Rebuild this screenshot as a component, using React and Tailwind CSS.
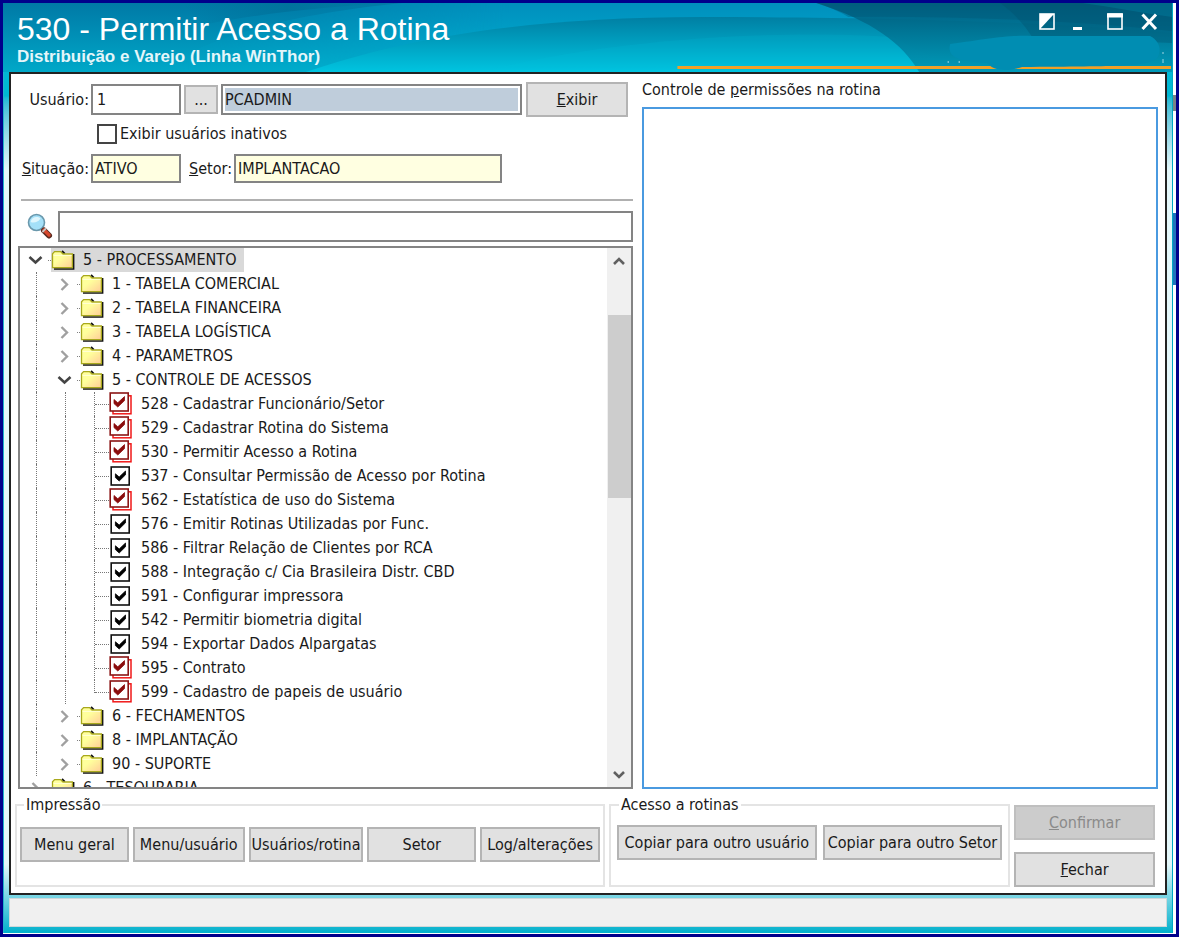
import { useState } from "react";

const treeItems = [
  { level: 0, label: "5 - PROCESSAMENTO", open: true },
  { level: 1, label: "1 - TABELA COMERCIAL" },
  { level: 1, label: "2 - TABELA FINANCEIRA" },
  { level: 1, label: "3 - TABELA LOGÍSTICA" },
  { level: 1, label: "4 - PARAMETROS" },
  { level: 1, label: "5 - CONTROLE DE ACESSOS", open: true },
  { level: 2, label: "528 - Cadastrar Funcionário/Setor", red: true },
  { level: 2, label: "529 - Cadastrar Rotina do Sistema", red: true },
  { level: 2, label: "530 - Permitir Acesso a Rotina", red: true },
  { level: 2, label: "537 - Consultar Permissão de Acesso por Rotina" },
  { level: 2, label: "562 - Estatística de uso do Sistema", red: true },
  { level: 2, label: "576 - Emitir Rotinas Utilizadas por Func." },
  { level: 2, label: "586 - Filtrar Relação de Clientes por RCA" },
  { level: 2, label: "588 - Integração c/ Cia Brasileira Distr. CBD" },
  { level: 2, label: "591 - Configurar impressora" },
  { level: 2, label: "542 - Permitir biometria digital" },
  { level: 2, label: "594 - Exportar Dados Alpargatas" },
  { level: 2, label: "595 - Contrato", red: true },
  { level: 2, label: "599 - Cadastro de papeis de usuário", red: true, last: true },
  { level: 1, label: "6 - FECHAMENTOS" },
  { level: 1, label: "8 - IMPLANTAÇÃO" },
  { level: 1, label: "90 - SUPORTE" },
  { level: 0, label: "6 - TESOURARIA" },
];

const FolderIcon = () => (
  <svg className="w-6 h-6 shrink-0" viewBox="0 0 24 24">
    <defs>
      <linearGradient id="folder" x1="0" y1="0" x2="1" y2="1">
        <stop offset="0.4" stopColor="#ffff9c" />
        <stop offset="1" stopColor="#ffcc98" />
      </linearGradient>
    </defs>
    <path d="M3 21H22.6V6" fill="none" stroke="#111" strokeWidth="1.6" />
    <path d="M11 3L13.8 5.6" fill="none" stroke="#111" strokeWidth="1.8" />
    <path d="M1.5 19.6V5.8L3.6 3.6H9.6L12 6H21.4V19.6Z" fill="url(#folder)" stroke="#a8a81c" strokeWidth="1.3" />
    <path d="M2.6 7.4H20.6" stroke="#ffffd8" strokeWidth="1" />
  </svg>
);

const CheckIcon = ({ red }) =>
  red ? (
    <svg className="w-6 h-6 shrink-0" viewBox="0 0 24 24">
      <rect x="4" y="3.8" width="18" height="18" fill="#fff" stroke="#f01818" strokeWidth="1.5" />
      <rect x="1.2" y="1" width="18" height="18" fill="#fff" stroke="#8b1515" strokeWidth="1.6" />
      <path d="M5 7.5L8.8 10.8L15.5 4.6V8.6L8.8 15L5 11.6Z" fill="#8b0d0d" stroke="#8b0d0d" strokeWidth="0.8" />
    </svg>
  ) : (
    <svg className="w-6 h-6 shrink-0" viewBox="0 0 24 24">
      <rect x="2.2" y="3" width="18" height="18" fill="#fff" stroke="#111" strokeWidth="1.6" />
      <path d="M6.4 9.8L10.2 13L16.5 7V10.8L10.2 17L6.4 13.6Z" fill="#000" stroke="#000" strokeWidth="0.8" />
    </svg>
  );

const Chevron = ({ open }) => (
  <svg className="w-[29px] h-6 shrink-0" viewBox="0 0 29 24" fill="none">
    {open ? (
      <path d="M7.5 9L13.5 14.5L19.5 9" stroke="#444" strokeWidth="2.6" />
    ) : (
      <path d="M10.5 7L16 12.5L10.5 18" stroke="#a0a0a0" strokeWidth="2.4" />
    )}
    <path d="M26 12.5H29" stroke="#808080" strokeDasharray="1 1" />
  </svg>
);

const Guide = () => (
  <span className="w-[29px] h-6 shrink-0 flex">
    <span className="w-[15px] border-r border-dotted border-[#777]" />
  </span>
);

const Elbow = ({ last }) => (
  <span className="w-[29px] h-6 shrink-0 flex items-start">
    <span className={`w-[15px] border-r border-dotted border-[#777] ${last ? "h-[13px]" : "h-6"}`} />
    <span className="flex-1 h-[13px] border-b border-dotted border-[#777]" />
  </span>
);

const TreeRow = ({ item, selected, onSelect }) => (
  <li className="flex h-6 shrink-0">
    {item.level > 0 && <Guide />}
    {item.level > 1 && <Guide />}
    {item.level > 1 ? <Elbow last={item.last} /> : <Chevron open={item.open} />}
    <button
      type="button"
      onClick={onSelect}
      className={`flex items-center gap-2 pr-2 whitespace-nowrap ${selected ? "bg-[#d9d9d9]" : ""}`}
    >
      {item.level > 1 ? <CheckIcon red={item.red} /> : <FolderIcon />}
      <span>{item.label}</span>
    </button>
  </li>
);

const Button = ({ children, className = "", disabled }) => (
  <button
    type="button"
    disabled={disabled}
    className={`border-2 whitespace-nowrap flex items-center justify-center ${
      disabled ? "bg-[#cccccc] border-[#bfbfbf] text-[#8a8a8a]" : "bg-[#e1e1e1] border-[#b4b4b4]"
    } ${className}`}
  >
    <span>{children}</span>
  </button>
);

const TitleBar = () => (
  <header className="relative h-[69px] shrink-0 flex justify-between text-white font-['Liberation_Sans',Arial,sans-serif]">
    <svg className="absolute inset-0 w-full h-full" viewBox="0 0 1170 69" preserveAspectRatio="none">
      <defs>
        <linearGradient id="base" x1="0" y1="0" x2="0" y2="1">
          <stop offset="0" stopColor="#0079a6" />
          <stop offset="1" stopColor="#00a8c8" />
        </linearGradient>
        <linearGradient id="band" x1="0" y1="0" x2="0" y2="1">
          <stop offset="0" stopColor="#008fbd" />
          <stop offset="1" stopColor="#00b4d2" />
        </linearGradient>
        <linearGradient id="bandFade" x1="0" y1="0" x2="1" y2="0">
          <stop offset="0" stopColor="#fff" stopOpacity="0" />
          <stop offset="0.35" stopColor="#fff" />
        </linearGradient>
        <mask id="bandMask">
          <rect x="150" width="1020" height="69" fill="url(#bandFade)" />
        </mask>
        <linearGradient id="wave" x1="0" y1="0" x2="0" y2="1">
          <stop offset="0" stopColor="#007fa3" />
          <stop offset="1" stopColor="#00c4e0" />
        </linearGradient>
        <linearGradient id="dark" x1="0" y1="0" x2="0" y2="1">
          <stop offset="0" stopColor="#005878" />
          <stop offset="1" stopColor="#0093b2" />
        </linearGradient>
        <linearGradient id="topGlow" x1="0" y1="0" x2="1" y2="0">
          <stop offset="0" stopColor="#006f98" stopOpacity="0" />
          <stop offset="0.5" stopColor="#006f98" stopOpacity="0.7" />
          <stop offset="1" stopColor="#006f98" stopOpacity="0" />
        </linearGradient>
      </defs>
      <rect width="1170" height="69" fill="url(#base)" />
      <path d="M150 69C200 40 260 14 400 0H1170V69Z" fill="url(#band)" mask="url(#bandMask)" />
      <path d="M200 22C260 10 320 4 390 0H180Z" fill="url(#topGlow)" />
      <path d="M303 69C400 36 520 14 700 14C900 14 1060 20 1170 30V69Z" fill="url(#wave)" />
      <path d="M480 69C600 36 780 26 890 34L960 69Z" fill="#00c0dc" opacity="0.15" />
      <path d="M814 0C870 18 900 40 917 69H1170V0Z" fill="url(#dark)" opacity="0.85" />
      <path d="M814 0C830 5 840 10 846 14C960 13 1080 18 1170 28V0Z" fill="#005575" opacity="0.35" />
      <path d="M998 0C1012 10 1024 24 1030 34L1170 40V0Z" fill="#00506e" opacity="0.35" />
      <path d="M1080 0C1110 4 1140 10 1170 14V0Z" fill="#0086a8" opacity="0.35" />
      <rect x="675" y="63" width="494" height="3" fill="#f0a028" />
      <path d="M948 41C985 36 1000 32 1030 33L1148 33C1158 38 1160 48 1155 55C1145 64 1120 63 1020 64C1000 70 990 66 985 60C960 58 944 56 948 41Z" fill="#008db2" />
      <path d="M946 58V60M957 58V60M1161 49V51M1161 56V60" stroke="#9fd4e2" strokeWidth="1" />
    </svg>
    <div className="relative pl-3.5 pt-2">
      <h1 className="text-[32px] leading-9">530 - Permitir Acesso a Rotina</h1>
      <p className="text-[17px] leading-5 font-bold text-[#e4f6fa]">Distribuição e Varejo (Linha WinThor)</p>
    </div>
    <div className="relative flex items-start gap-[17px] pt-2.5 pr-3.5">
      <button type="button" aria-label="Recolher">
        <svg width="17" height="18" viewBox="0 0 17 18">
          <rect x="1" y="1" width="14" height="15" fill="none" stroke="#fff" strokeWidth="1.6" />
          <path d="M1 1H15L1 16Z" fill="#fff" />
        </svg>
      </button>
      <button type="button" aria-label="Minimizar">
        <svg width="17" height="18" viewBox="0 0 17 18">
          <path d="M0 15.5H9" stroke="#fff" strokeWidth="3" />
        </svg>
      </button>
      <button type="button" aria-label="Maximizar">
        <svg width="17" height="18" viewBox="0 0 17 18">
          <rect x="1" y="1" width="14" height="15" fill="none" stroke="#fff" strokeWidth="1.6" />
          <path d="M0 2.5H16" stroke="#fff" strokeWidth="4" />
        </svg>
      </button>
      <button type="button" aria-label="Fechar janela">
        <svg width="17" height="18" viewBox="0 0 17 18">
          <path d="M1.5 1.5L15 16M15 1.5L1.5 16" stroke="#fff" strokeWidth="3" />
        </svg>
      </button>
    </div>
  </header>
);

const App = () => {
  const [user, setUser] = useState("1");
  const [showInactive, setShowInactive] = useState(false);
  const [search, setSearch] = useState("");
  const [selected, setSelected] = useState(0);

  return (
    <div className="h-screen flex border-[3px] border-[#00008b] bg-white text-[#1a1a1a] text-base leading-6 font-['DejaVu_Sans_Condensed','Noto_Sans',sans-serif]">
      <div className="flex-1 min-w-0 flex flex-col mb-px border-r border-[#00a8c4] bg-linear-to-b from-[#00b8d4] from-10% via-[#e4f7fa] via-18% to-[#e4f7fa]">
        <TitleBar />
        <div className="flex-1 min-h-0 flex flex-col px-[5px] border-l border-[#20b4cc] bg-linear-to-b from-transparent from-92% to-[#00b0cc]">
          <main className="flex-1 min-h-0 flex flex-col border-2 border-[#222] bg-white px-1 pt-2 pb-2">
            <div className="flex-1 min-h-0 grid grid-cols-[615fr_516fr] gap-[9px] px-[3px]">
              <section className="flex flex-col min-h-0">
                <div className="flex items-center h-[35px] shrink-0">
                  <label htmlFor="usuario" className="w-[73px] pr-0.5 text-right">Usuário:</label>
                  <input
                    id="usuario"
                    value={user}
                    onChange={(e) => setUser(e.target.value)}
                    className="w-[90px] h-[31px] border-2 border-[#848484] px-1"
                  />
                  <Button className="w-[34px] h-[29px] mx-[3px]">...</Button>
                  <input
                    aria-label="Nome do usuário"
                    readOnly
                    value="PCADMIN"
                    className="flex-1 min-w-0 h-[31px] border-2 border-[#848484] bg-[#bfcddb] shadow-[inset_0_0_0_2px_#fff] px-0.5"
                  />
                  <Button className="w-[102px] h-[35px] ml-1 mr-[5px]">
                    <u>E</u>xibir
                  </Button>
                </div>
                <label className="flex items-center gap-[3px] h-5 mt-[7px] ml-[79px] shrink-0">
                  <input
                    type="checkbox"
                    checked={showInactive}
                    onChange={(e) => setShowInactive(e.target.checked)}
                    className="appearance-none size-5 border-2 border-[#444] bg-white checked:bg-[#444]"
                  />
                  Exibir usuários inativos
                </label>
                <div className="flex items-center h-[29px] mt-2.5 shrink-0">
                  <label htmlFor="situacao" className="w-[73px] pr-0.5 text-right">
                    <u>S</u>ituação:
                  </label>
                  <input id="situacao" readOnly value="ATIVO" className="w-[90px] h-[29px] border-2 border-[#848484] bg-[#ffffe1] px-0.5" />
                  <label htmlFor="setor" className="w-[53px] pr-0.5 text-right">
                    <u>S</u>etor:
                  </label>
                  <input id="setor" readOnly value="IMPLANTACAO" className="w-[268px] h-[29px] border-2 border-[#848484] bg-[#ffffe1] px-0.5" />
                </div>
                <hr className="mt-4 ml-[3px] border-t-2 border-[#b0b0b0] shrink-0" />
                <div className="flex items-center mt-2.5 shrink-0">
                  <svg className="w-[30px] h-[30px] ml-2 mr-0.5 shrink-0" viewBox="0 0 30 30">
                    <path d="M15 16L19 20" stroke="#777" strokeWidth="3" />
                    <circle cx="10.5" cy="10.5" r="8" fill="#a4e0f8" stroke="#6a98ac" strokeWidth="1.6" />
                    <path d="M4.6 10C5.4 5 11 3.6 14.6 6.4C12 10 8.4 11.4 4.6 10Z" fill="#dff6fd" />
                    <path d="M18 18.5L23 23.5" stroke="#5a2a20" strokeWidth="6" strokeLinecap="round" />
                    <path d="M18 18L23 23" stroke="#d8482c" strokeWidth="3.4" strokeLinecap="round" />
                    <path d="M16.4 20L20 16.4" stroke="#c8c8c8" strokeWidth="1.8" />
                  </svg>
                  <input
                    aria-label="Pesquisar rotina"
                    value={search}
                    onChange={(e) => setSearch(e.target.value)}
                    className="flex-1 min-w-0 h-[31px] border-2 border-[#848484] px-1"
                  />
                </div>
                <div className="flex-1 min-h-0 mt-1 flex border-2 border-[#848484]">
                  <ul className="flex-1 min-w-0 overflow-hidden pl-0.5">
                    {treeItems.map((item, i) => (
                      <TreeRow key={item.label} item={item} selected={selected === i} onSelect={() => setSelected(i)} />
                    ))}
                  </ul>
                  <div className="w-6 flex flex-col items-center bg-[#f0f0f0]">
                    <svg width="24" height="67" viewBox="0 0 24 67" fill="none">
                      <path d="M7 16L12 11L17 16" stroke="#606060" strokeWidth="2.6" />
                    </svg>
                    <div className="w-[23px] h-[183px] bg-[#cdcdcd]" />
                    <svg className="mt-auto" width="24" height="24" viewBox="0 0 24 24" fill="none">
                      <path d="M7 9L12 14L17 9" stroke="#606060" strokeWidth="2.6" />
                    </svg>
                  </div>
                </div>
              </section>

              <section className="flex flex-col min-h-0">
                <label htmlFor="permissoes" className="h-[25px] leading-4 shrink-0">
                  Controle de <u>p</u>ermissões na rotina
                </label>
                <textarea id="permissoes" className="flex-1 resize-none border-2 border-[#4a9ae0] outline-none" />
              </section>
            </div>

            <div className="mt-1 h-[92px] shrink-0 grid grid-cols-[591fr_402fr_141fr] gap-1 pr-1.5">
              <fieldset className="min-w-0 border-2 border-[#e4e4e4] px-[3px]">
                <legend className="ml-1 px-0.5">Impressão</legend>
                <div className="mt-2.5 grid grid-cols-[109fr_112fr_115fr_109fr_120fr] gap-1">
                  <Button className="h-[35px]">
                    Menu <u>g</u>eral
                  </Button>
                  <Button className="h-[35px]">Menu/usuário</Button>
                  <Button className="h-[35px]">Usuários/rotina</Button>
                  <Button className="h-[35px]">Setor</Button>
                  <Button className="h-[35px]">Log/alterações</Button>
                </div>
              </fieldset>
              <fieldset className="min-w-0 border-2 border-[#e4e4e4] px-[6px]">
                <legend className="ml-0.5 px-0.5">Acesso a rotinas</legend>
                <div className="mt-2 grid grid-cols-[200fr_180fr] gap-1.5">
                  <Button className="h-[35px]">Copiar para outro usuário</Button>
                  <Button className="h-[35px]">Copiar para outro Setor</Button>
                </div>
              </fieldset>
              <div className="flex flex-col gap-3 pt-3">
                <Button disabled className="h-[35px]">
                  <u>C</u>onfirmar
                </Button>
                <Button className="h-[35px]">
                  <u>F</u>echar
                </Button>
              </div>
            </div>
          </main>
          <footer className="mt-[3px] mb-1.5 h-[29px] shrink-0 border border-[#cfd8da] bg-[#f0f0f0]" />
        </div>
      </div>
      {/* strip of the window behind */}
      <div className="w-[3px] shrink-0 flex flex-col bg-white" aria-hidden="true">
        <div className="mt-[92px] h-4 bg-[#7a8488]" />
        <div className="mt-[102px] h-[72px] bg-[#1f74bc]" />
      </div>
    </div>
  );
};

export default App;
